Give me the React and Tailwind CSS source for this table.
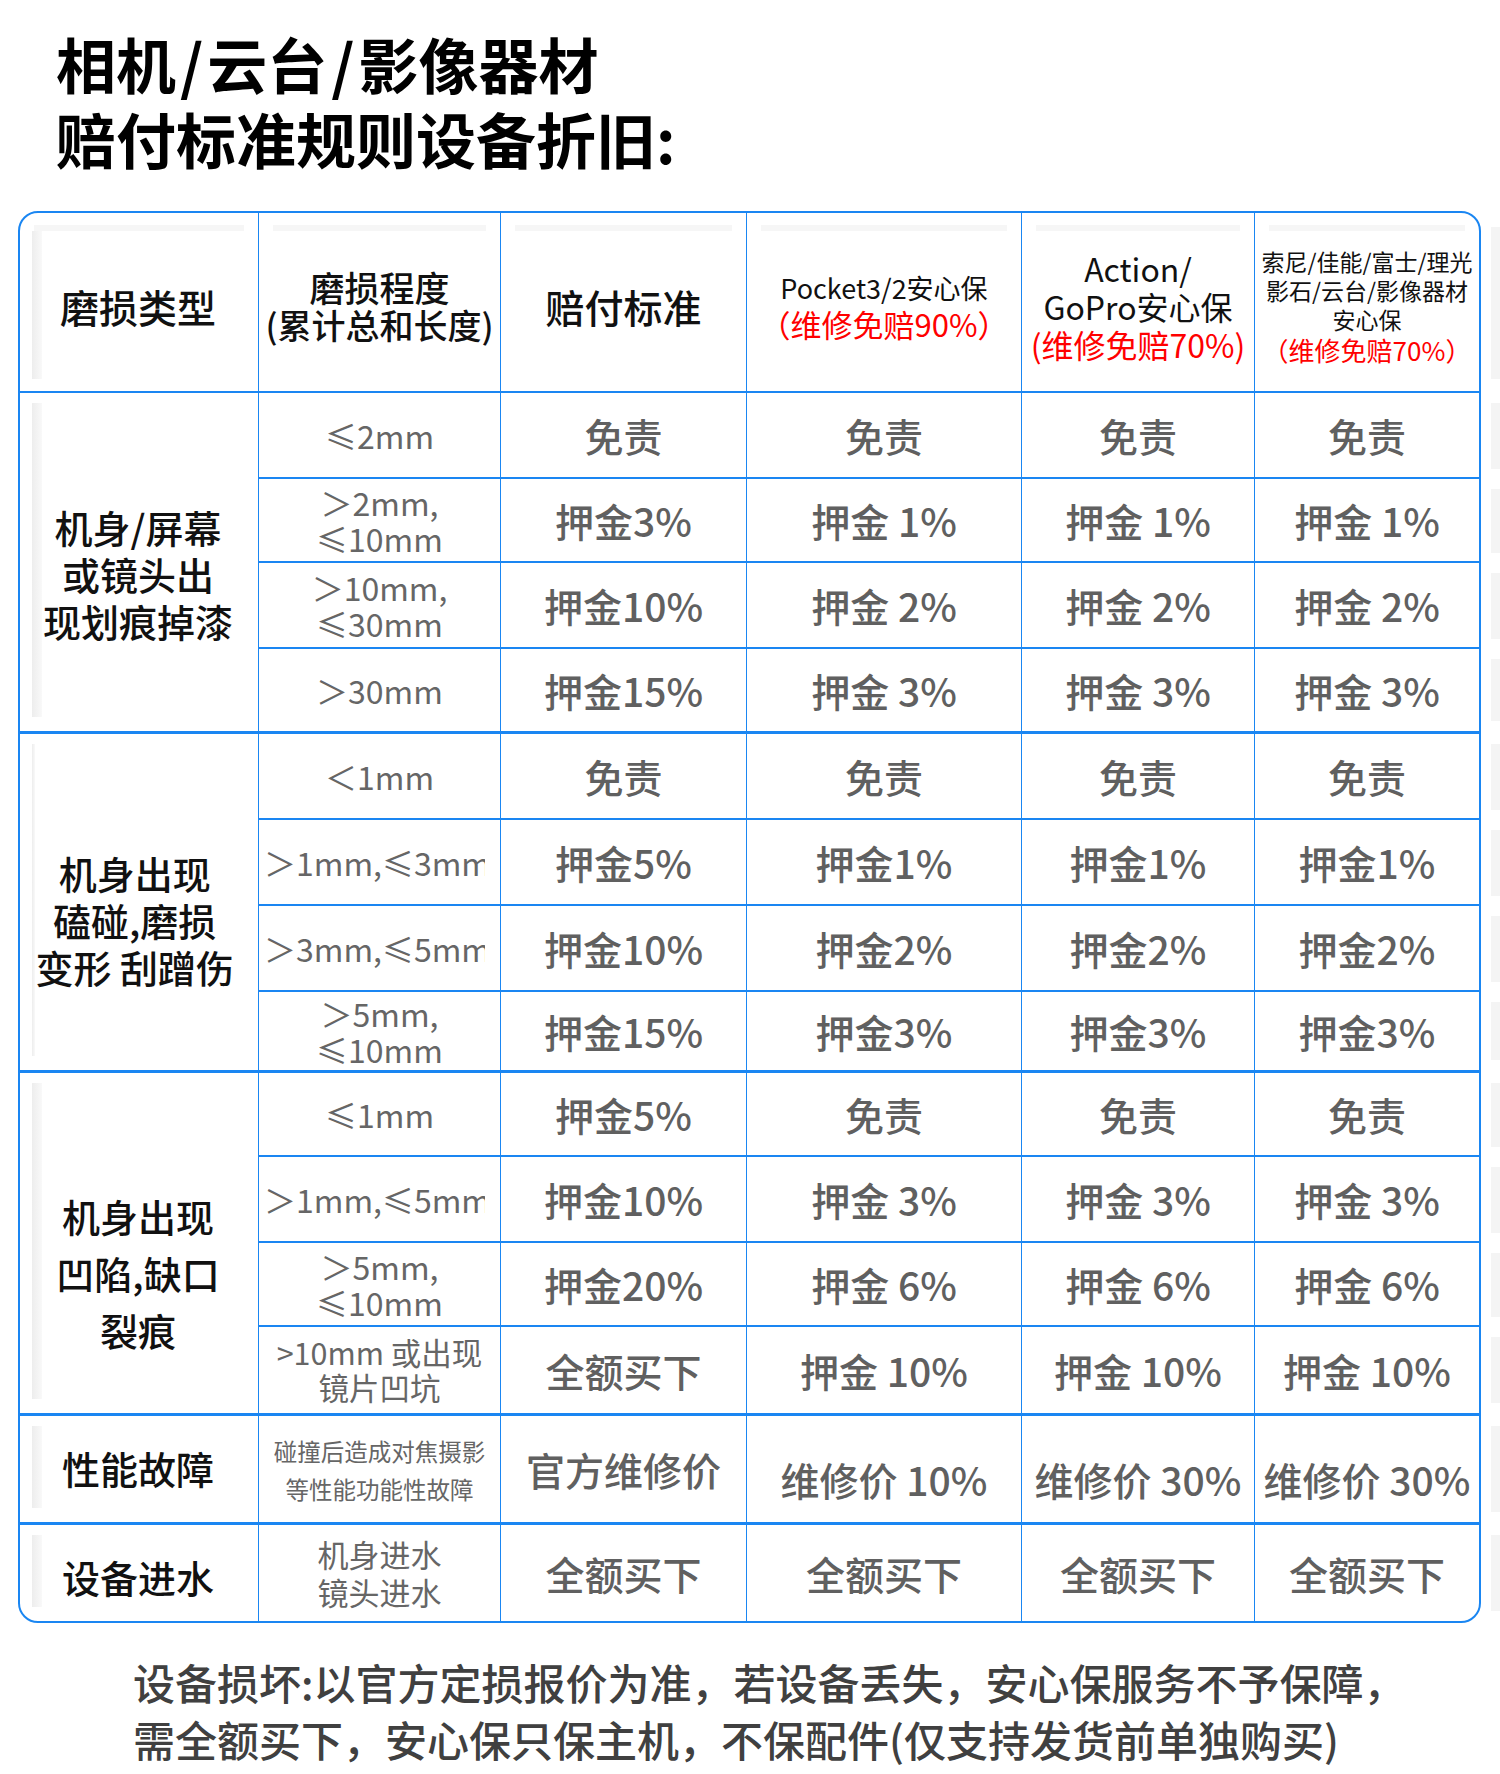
const line = "border-[#1a86f2]";

const sections = [
  {
    label: ["机身/屏幕", "或镜头出", "现划痕掉漆"],
    labelClass: "leading-[47px] pt-[26px]",
    h: "h-[341px]",
    rows: [
      { h: "h-[86px]", range: ["≤2mm"], vals: ["免责", "免责", "免责", "免责"] },
      { h: "h-[84px]", range: ["＞2mm,", "≤10mm"], vals: ["押金3%", "押金 1%", "押金 1%", "押金 1%"] },
      { h: "h-[86px]", range: ["＞10mm,", "≤30mm"], vals: ["押金10%", "押金 2%", "押金 2%", "押金 2%"] },
      { h: "h-[82px]", range: ["＞30mm"], vals: ["押金15%", "押金 3%", "押金 3%", "押金 3%"] },
    ],
  },
  {
    label: ["机身出现", "磕碰,磨损", "变形 刮蹭伤"],
    labelClass: "leading-[47px] pt-[38px]",
    h: "h-[339px]",
    rows: [
      { h: "h-[86px]", range: ["＜1mm"], vals: ["免责", "免责", "免责", "免责"] },
      { h: "h-[86px]", range: ["＞1mm,≤3mm"], clip: true, vals: ["押金5%", "押金1%", "押金1%", "押金1%"] },
      { h: "h-[86px]", range: ["＞3mm,≤5mm"], clip: true, vals: ["押金10%", "押金2%", "押金2%", "押金2%"] },
      { h: "h-[78px]", range: ["＞5mm,", "≤10mm"], vals: ["押金15%", "押金3%", "押金3%", "押金3%"] },
    ],
  },
  {
    label: ["机身出现", "凹陷,缺口", "裂痕"],
    labelClass: "leading-[57px] pt-[62px]",
    h: "h-[343px]",
    rows: [
      { h: "h-[84px]", range: ["≤1mm"], vals: ["押金5%", "免责", "免责", "免责"] },
      { h: "h-[86px]", range: ["＞1mm,≤5mm"], clip: true, vals: ["押金10%", "押金 3%", "押金 3%", "押金 3%"] },
      { h: "h-[84px]", range: ["＞5mm,", "≤10mm"], vals: ["押金20%", "押金 6%", "押金 6%", "押金 6%"] },
      { h: "h-[86px]", range: [">10mm 或出现", "镜片凹坑"], small: true, vals: ["全额买下", "押金 10%", "押金 10%", "押金 10%"] },
    ],
  },
  {
    label: ["性能故障"],
    labelClass: "leading-[47px]",
    h: "h-[109px]",
    rows: [
      {
        h: "h-[106px]",
        range: ["碰撞后造成对焦摄影", "等性能功能性故障"],
        tiny: true,
        vals: ["官方维修价", "维修价 10%", "维修价 30%", "维修价 30%"],
        low: true,
      },
    ],
  },
  {
    label: ["设备进水"],
    labelClass: "leading-[47px] pt-[10px]",
    h: "h-[96px]",
    last: true,
    rows: [
      { h: "h-[96px]", range: ["机身进水", "镜头进水"], water: true, vals: ["全额买下", "全额买下", "全额买下", "全额买下"] },
    ],
  },
];

const valueWidths = ["w-[246px]", "w-[275px]", "w-[233px]", "w-[224px]"];

function LabelCell({ children, className = "" }) {
  return (
    <div className={`w-[239px] shrink-0 border-r ${line} flex pl-[12px] pt-[10px] pb-[14px]`}>
      <div className="w-[10px] bg-linear-to-r from-[#ededed] to-[#f9f9f9]" />
      <div className={`flex-1 flex items-center justify-center pr-[24px] text-center whitespace-nowrap text-[38px] font-medium text-[#111] ${className}`}>
        <div>{children}</div>
      </div>
    </div>
  );
}

function RangeCell({ row }) {
  if (row.clip) {
    return (
      <div className={`w-[242px] shrink-0 border-r ${line} flex items-center`}>
        <div className="w-[221px] ml-[5px] overflow-hidden whitespace-nowrap text-[32px] text-[#666]">
          {row.range[0]}
        </div>
      </div>
    );
  }
  const size = row.tiny
    ? "text-[23.5px] leading-[38px] pt-[2px]"
    : row.small
      ? "text-[30.5px] leading-[35px]"
      : row.water
        ? "text-[31px] leading-[38px]"
        : "text-[32px] leading-[36px]";
  return (
    <div className={`w-[242px] shrink-0 border-r ${line} flex items-center justify-center text-center text-[#666] whitespace-nowrap ${size}`}>
      <div>
        {row.range.map((t) => (
          <div key={t}>{t}</div>
        ))}
      </div>
    </div>
  );
}

function Section({ s }) {
  return (
    <div className={`flex ${s.h} ${s.last ? "" : `border-b-[3px] ${line}`}`}>
      <LabelCell className={s.labelClass}>
        {s.label.map((t) => (
          <div key={t}>{t}</div>
        ))}
      </LabelCell>
      <div className="flex flex-col">
        {s.rows.map((row, i) => (
          <div
            key={i}
            className={`flex shrink-0 ${row.h} ${i < s.rows.length - 1 ? `border-b-2 ${line}` : ""}`}
          >
            <RangeCell row={row} />
            {row.vals.map((v, j) => (
              <div
                key={j}
                className={`${valueWidths[j]} shrink-0 flex items-center justify-center whitespace-nowrap text-[39px] font-medium text-[#606060] ${
                  j < 3 ? `border-r ${line}` : ""
                } ${row.low && j > 0 ? "pt-[20px]" : ""}`}
              >
                {v}
              </div>
            ))}
          </div>
        ))}
      </div>
    </div>
  );
}

function HeadCell({ w, border = true, children, bar = false }) {
  return (
    <div className={`${w} shrink-0 flex flex-col ${border ? `border-r ${line}` : ""}`}>
      <div className="h-[6px] mx-[14px] mt-[12px] bg-[#f6f6f6]" />
      <div className={`flex-1 flex pb-[10px] ${bar ? "pl-[12px]" : ""}`}>
        {bar && <div className="w-[10px] mb-[2px] bg-linear-to-r from-[#ededed] to-[#f9f9f9]" />}
        <div className={`flex-1 flex items-center justify-center text-center whitespace-nowrap ${bar ? "pr-[24px]" : ""}`}>
          {children}
        </div>
      </div>
    </div>
  );
}

function EdgeBars() {
  return (
    <div className="w-[9px] ml-[10px] mt-[2px] flex flex-col">
      <div className="h-[180px] py-[14px]">
        <div className="h-full bg-[#f4f4f4]" />
      </div>
      {sections.map((s, i) => (
        <div key={i} className={`flex flex-col ${s.h}`}>
          {s.rows.map((row, j) => (
            <div key={j} className={`${row.h} py-[10px]`}>
              <div className="h-full bg-[#f4f4f4]" />
            </div>
          ))}
        </div>
      ))}
    </div>
  );
}

export default function App() {
  return (
    <div className="w-[1500px] h-[1774px] bg-white font-['Noto_Sans_CJK_SC','Noto_Sans',sans-serif] overflow-hidden">
      <div className="pl-[56px] pt-[25px] text-[60px] leading-[75px] font-bold text-black">
        <div>
          相机<span className="mx-[4px]">/</span>云台<span className="mx-[4px]">/</span>影像器材
        </div>
        <div>赔付标准规则设备折旧:</div>
      </div>

      <div className="flex mt-[36px] ml-[18px]">
        <div className={`w-[1463px] shrink-0 border-2 ${line} rounded-[20px] overflow-hidden`}>
          <div className={`flex h-[180px] border-b-2 ${line}`}>
            <HeadCell w="w-[239px]" bar>
              <span className="text-[39px] font-medium text-[#111]">磨损类型</span>
            </HeadCell>
            <HeadCell w="w-[242px]">
              <div className="leading-[38px] font-medium text-[#111]">
                <div className="text-[35px]">磨损程度</div>
                <div className="text-[34px]">(累计总和长度)</div>
              </div>
            </HeadCell>
            <HeadCell w="w-[246px]">
              <span className="text-[39px] font-medium text-[#111]">赔付标准</span>
            </HeadCell>
            <HeadCell w="w-[275px]">
              <div className="text-[27px] leading-[36px] text-[#111]">
                <div>Pocket3/2安心保</div>
                <div className="text-[31px] text-[#ff0000]">（维修免赔90%）</div>
              </div>
            </HeadCell>
            <HeadCell w="w-[233px]">
              <div className="text-[32px] leading-[38px] text-[#111]">
                <div>Action/</div>
                <div>GoPro安心保</div>
                <div className="text-[#ff0000]">(维修免赔70%)</div>
              </div>
            </HeadCell>
            <HeadCell w="w-[224px]" border={false}>
              <div className="text-[23px] leading-[29px] text-[#111]">
                <div>索尼/佳能/富士/理光</div>
                <div>影石/云台/影像器材</div>
                <div>安心保</div>
                <div className="text-[26px] leading-[32px] text-[#ff0000]">（维修免赔70%）</div>
              </div>
            </HeadCell>
          </div>

          {sections.map((s, i) => (
            <Section key={i} s={s} />
          ))}
        </div>
        <EdgeBars />
      </div>

      <div className="pl-[133px] mt-[30px] text-[42px] leading-[57px] font-medium text-[#404040] whitespace-nowrap">
        <div>设备损坏:以官方定损报价为准，若设备丢失，安心保服务不予保障，</div>
        <div>需全额买下，安心保只保主机，不保配件(仅支持发货前单独购买)</div>
      </div>
    </div>
  );
}
